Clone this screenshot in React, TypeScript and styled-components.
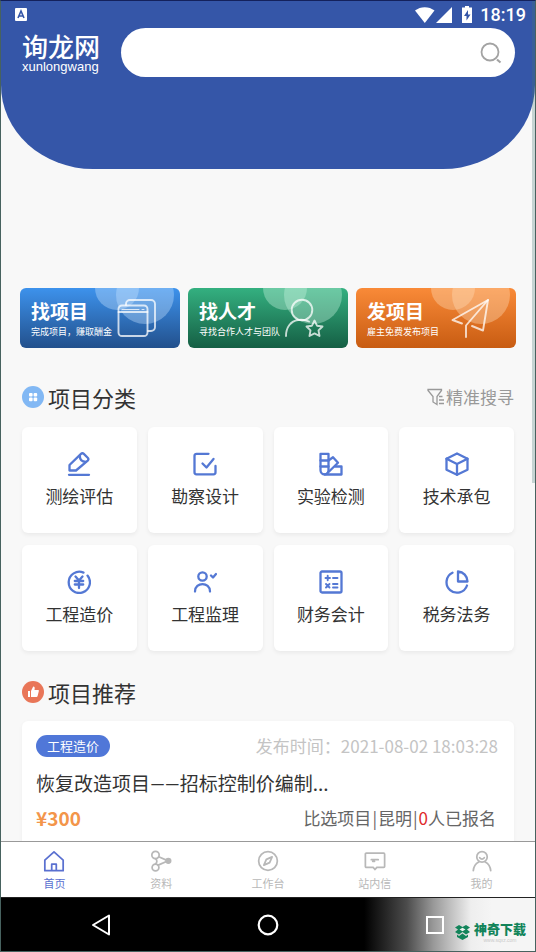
import React from "react";
import styled, { createGlobalStyle } from "styled-components";

const GlobalStyle = createGlobalStyle`
  *, *::before, *::after { box-sizing: border-box; }
  body {
    margin: 0;
    background: #f8f8f8;
    color: #333;
    font-family: "Noto Sans CJK SC", "Noto Sans", sans-serif;
  }
  button, input { font: inherit; color: inherit; }
  button { border: 0; padding: 0; background: none; cursor: pointer; }
  a { color: inherit; text-decoration: none; }
  h1, h2, h3, p { margin: 0; font-weight: 400; }
  svg { display: block; flex: none; }
`;

const Screen = styled.div`
  position: relative;
  display: flex;
  flex-direction: column;
  height: 100vh;
  overflow: hidden;
  border: 1px solid #47625f;
  border-top-color: #14215c;
`;

const ScrollThumb = styled.div`
  position: absolute;
  top: 0;
  right: 0;
  width: 3px;
  height: 482px;
  background: rgba(70, 120, 115, 0.28);
`;

const Content = styled.main`
  flex: 1;
  min-height: 0;
  overflow: hidden;
`;

const Header = styled.header`
  height: 168px;
  background: #3556a8;
  border-radius: 0 0 92px 92px / 0 0 84px 84px;
  color: #fff;
`;

const StatusBar = styled.div`
  display: flex;
  align-items: center;
  justify-content: space-between;
  height: 27px;
  padding: 0 9px 0 14px;
`;

const StatusGroup = styled.div`
  display: flex;
  align-items: center;
  gap: 7px;
`;

const Clock = styled.time`
  font: 500 18px/27px Roboto, sans-serif;
`;

const HeaderRow = styled.div`
  display: flex;
  align-items: center;
  gap: 19px;
  padding: 0 20px 0 21px;
`;

const Logo = styled.h1`
  display: flex;
  flex-direction: column;
  width: 80px;
`;

const LogoName = styled.span`
  font-size: 26px;
  font-weight: 500;
  line-height: 28px;
  white-space: nowrap;
`;

const LogoLatin = styled.span`
  font: 400 13px/14px "Liberation Sans", Arial, sans-serif;
`;

const SearchForm = styled.form`
  flex: 1;
  display: flex;
  align-items: center;
  height: 49px;
  padding: 0 13px 0 24px;
  border-radius: 25px;
  background: #fff;
`;

const SearchInput = styled.input`
  flex: 1;
  min-width: 0;
  border: 0;
  outline: 0;
  background: transparent;
  color: #333;
  font-size: 17px;
`;

const Carousel = styled.div`
  height: 119px;
`;

const Banners = styled.nav`
  display: grid;
  grid-template-columns: repeat(3, 1fr);
  gap: 8px;
  padding: 0 19px;
`;

const Banner = styled.a<{ $from: string; $to: string }>`
  position: relative;
  height: 60px;
  padding: 11px 0 0 11px;
  border-radius: 6px;
  overflow: hidden;
  background: linear-gradient(${(p) => p.$from}, ${(p) => p.$to});
  color: #fff;
`;

const BannerArt = styled.svg`
  position: absolute;
  top: 0;
  right: 0;
`;

const BannerTitle = styled.h2`
  position: relative;
  font-size: 19px;
  font-weight: 700;
  line-height: 24px;
`;

const BannerNote = styled.p`
  position: relative;
  font-size: 9px;
  line-height: 18px;
  white-space: nowrap;
`;

const Section = styled.section`
  padding: 0 21px;
`;

const SectionHead = styled.div<{ $top: number; $bottom: number }>`
  display: flex;
  align-items: center;
  justify-content: space-between;
  height: 32px;
  margin: ${(p) => p.$top}px 0 ${(p) => p.$bottom}px;
`;

const SectionTitle = styled.h2`
  display: flex;
  align-items: center;
  gap: 4px;
  font-size: 22px;
  line-height: 32px;
`;

const FilterButton = styled.button`
  display: flex;
  align-items: center;
  gap: 1px;
  color: #999;
  font-size: 17px;
  line-height: 24px;
`;

const CategoryGrid = styled.div`
  display: grid;
  grid-template-columns: repeat(4, 1fr);
  gap: 12px 11px;
`;

const Category = styled.button`
  display: flex;
  flex-direction: column;
  align-items: center;
  gap: 7px;
  height: 106px;
  padding-top: 25px;
  border-radius: 6px;
  background: #fff;
  box-shadow: 0 2px 4px rgba(0, 0, 0, 0.06);
  font-size: 17px;
  line-height: 26px;
`;

const Project = styled.article`
  display: flex;
  flex-direction: column;
  padding: 12px 16px 16px 14px;
  border-radius: 6px;
  background: #fff;
  box-shadow: 0 1px 4px rgba(0, 0, 0, 0.04);
`;

const ProjectRow = styled.div`
  display: flex;
  align-items: center;
  justify-content: space-between;
  font-size: 17px;
  line-height: 26px;
`;

const Tag = styled.span`
  padding: 0 11px;
  border-radius: 11px;
  background: #5077d8;
  color: #fff;
  font-size: 13px;
  line-height: 22px;
`;

const Published = styled.span`
  color: #c4c4c4;
`;

const ProjectTitle = styled.h3`
  margin: 10px 0 6px;
  font-size: 19px;
  line-height: 28px;
`;

const Dashes = styled.span`
  font-family: Roboto, sans-serif;
`;

const Price = styled.strong`
  color: #f3954a;
  font-size: 19px;
  font-weight: 700;
`;

const Meta = styled.span`
  padding-right: 2px;
  color: #666;
`;

const Bar = styled.span`
  margin: 0 1px;
`;

const Count = styled.span`
  color: #e02a2a;
`;

const TabBar = styled.nav`
  display: grid;
  grid-template-columns: repeat(5, 1fr);
  height: 56px;
  border-top: 1px solid #999;
  background: #fff;
`;

const Tab = styled.button<{ $active: boolean }>`
  display: flex;
  flex-direction: column;
  align-items: center;
  gap: 2px;
  padding-top: 8px;
  color: ${(p) => (p.$active ? "#5a70d0" : "#b8b8b8")};
  font-size: 11px;
  line-height: 18px;
`;

const SystemBar = styled.div`
  position: relative;
  height: 54px;
  border-top: 1px solid #222;
  background: linear-gradient(90deg, #000 68%, #4c4c4c 76%, #999 81%, #eee 88%, #f5f5f5 92%);
`;

const SystemKeys = styled.div`
  display: flex;
  align-items: center;
  justify-content: space-between;
  height: 100%;
  padding: 0 90px;
`;

const SystemKey = styled.button`
  display: flex;
`;

const Watermark = styled.div`
  position: absolute;
  right: 9px;
  bottom: 8px;
  display: flex;
  align-items: center;
  gap: 4px;
  color: #12845a;
`;

const WatermarkName = styled.div`
  font-size: 13px;
  font-weight: 900;
  line-height: 16px;
`;

const WatermarkSite = styled.div`
  color: #c9c9c9;
  font: 5px/6px "Liberation Sans", Arial, sans-serif;
  text-align: center;
`;

type IconProps = { children: React.ReactNode; size?: number; width?: number };

const LineIcon = ({ children, size = 24, width = 2.3 }: IconProps) => (
  <svg
    width={size}
    height={size}
    viewBox="0 0 24 24"
    fill="none"
    stroke="currentColor"
    strokeWidth={width}
    strokeLinecap="round"
    strokeLinejoin="round"
    aria-hidden="true"
  >
    {children}
  </svg>
);

const CategoryIcon = styled.span`
  color: #5478d4;
`;

const categories = [
  {
    label: "测绘评估",
    icon: (
      <>
        <path d="M2 22.800h20" />
        <path d="M2.500 18.500v-5.500L14 1.900a2 2 0 0 1 2.800 0l3.900 3.900a2 2 0 0 1 0 2.800L9 18.500z" />
        <path d="M12.800 3.800c0 4 2 6 6 6" />
      </>
    ),
  },
  {
    label: "勘察设计",
    icon: (
      <>
        <path d="M15.500 1.800H3.500A2 2 0 0 0 1.500 3.800v16.500a2 2 0 0 0 2 2h17a2 2 0 0 0 2-2V14" />
        <path d="M9.500 11.500l4 4 7-8.500" />
      </>
    ),
  },
  {
    label: "实验检测",
    icon: (
      <>
        <path d="M1.500 1.800h8v16.500a4 4 0 0 1-8 0z" />
        <path d="M1.500 8.500h8M1.500 14.500h8" />
        <path d="M9.500 8.500l4.500-3.200 5 5.500L8.500 21" />
        <path d="M16 14.500h6.500v8H5.500" />
      </>
    ),
  },
  {
    label: "技术承包",
    icon: (
      <>
        <path d="M12 1.500l10.500 5.300v10.900L12 22.800 1.500 17.700V6.800z" />
        <path d="M1.500 6.800L12 12l10.500-5.200M12 12v10.800" />
      </>
    ),
  },
  {
    label: "工程造价",
    icon: (
      <>
        <path d="M16.500 2.600A10.600 10.600 0 1 0 20.500 5.600" />
        <path d="M8.500 6.500L12 10.500l3.500-4M7.800 11h8.400M7.800 14.500h8.400M12 10.500V18" />
      </>
    ),
  },
  {
    label: "工程监理",
    icon: (
      <>
        <circle cx="9.500" cy="6.500" r="4.200" />
        <path d="M2 21.500c0-9.800 15-9.800 15 0" />
        <path d="M18 5.500l2 2 3-3.500" />
      </>
    ),
  },
  {
    label: "财务会计",
    icon: (
      <>
        <rect x="1.500" y="1.500" width="21" height="21" rx="1.500" />
        <path
          d="M6.500 8h4.500M8.700 5.800v4.500M14 8h4.500M7 14l3.500 3.500M10.500 14L7 17.500M14 14h4.500M14 17.500h4.500"
          strokeWidth="1.900"
        />
      </>
    ),
  },
  {
    label: "税务法务",
    icon: (
      <>
        <path d="M7.500 2.700A10.500 10.500 0 1 0 22 15.500" />
        <path d="M13 1.500v10h9.500A10 10 0 0 0 13 1.500z" />
      </>
    ),
  },
];

const tabs = [
  {
    label: "首页",
    icon: (
      <>
        <path d="M2 11L12 2l10 9v11.500H2z" />
        <path d="M9.500 22v-6.500h5V22" />
      </>
    ),
  },
  {
    label: "资料",
    icon: (
      <>
        <circle cx="6" cy="5.500" r="4" />
        <circle cx="6" cy="19" r="3.700" />
        <circle cx="20" cy="11.800" r="2.500" fill="currentColor" />
        <path d="M9.500 7.300l9 4M9 16.500l9.500-4.200M6 9.500c2 1.500 2 4 0 5.800" />
      </>
    ),
  },
  {
    label: "工作台",
    icon: (
      <>
        <circle cx="12" cy="12" r="10.200" />
        <path d="M16.500 7.500l-2.700 6.300-6.300 2.700 2.700-6.300z" />
      </>
    ),
  },
  {
    label: "站内信",
    icon: (
      <>
        <path d="M3 3.500h18.500a1 1 0 0 1 1 1V18a1 1 0 0 1-1 1H14l-2 2.300-2-2.300H2.500a1 1 0 0 1-1-1V4.500a1 1 0 0 1 1-1z" />
        <path d="M8 10.500h7.500M9.500 12.300h2" />
      </>
    ),
  },
  {
    label: "我的",
    icon: (
      <>
        <circle cx="12" cy="7.500" r="5.700" />
        <path d="M2.500 22.500c.5-5 3-8 6-9.500M21.500 22.500c-.5-5-3-8-6-9.500M9.500 8.500c1.500 2 3.500 2 5 0" />
      </>
    ),
  },
];

const banners = [
  {
    title: "找项目",
    note: "完成项目，赚取酬金",
    from: "#3d92ec",
    to: "#22508c",
    tint: "#c4e2ff",
    art: (
      <>
        <path d="M106 17v-1a4 4 0 0 1 4-4h21a4 4 0 0 1 4 4v23a4 4 0 0 1-4 4h-3" />
        <rect x="98.500" y="17.500" width="29" height="30.500" rx="3.500" />
        <path d="M98.500 24h29" />
        <path d="M102 21.500h17M122 21.500h2" strokeWidth="1" />
      </>
    ),
  },
  {
    title: "找人才",
    note: "寻找合作人才与团队",
    from: "#34b080",
    to: "#155f44",
    tint: "#c9f5e0",
    art: (
      <>
        <circle cx="114" cy="22" r="10.300" />
        <path d="M98 48c0-9 5-15 12-16 4-.5 8 0 11 1.500" />
        <path d="M126.500 32.500l2.500 5.200 5.500.8-4 3.900 1 5.600-5-2.600-5 2.600 1-5.600-4-3.900 5.500-.8z" />
      </>
    ),
  },
  {
    title: "发项目",
    note: "雇主免费发布项目",
    from: "#f98a38",
    to: "#c85c12",
    tint: "#ffdcb8",
    art: (
      <>
        <path d="M106 35.500L96.500 32 132 12l-5 30.500-11-4.500" />
        <path d="M132 12l-22 25.500V49" />
      </>
    ),
  },
];

export default function App() {
  return (
    <>
      <GlobalStyle />
      <Screen>
        <Content>
          <Header>
            <StatusBar>
              <svg width="12" height="13" viewBox="0 0 12 13" aria-hidden="true">
                <rect width="12" height="13" rx="1" fill="#fff" />
                <path d="M3 10l3-7 3 7M4 8h4" fill="none" stroke="#3556a8" strokeWidth="1.600" />
              </svg>
              <StatusGroup>
                <svg width="58" height="18" viewBox="0 0 58 18" fill="#fff" aria-hidden="true">
                  <path d="M0 4.500C5.500 0 14 0 19.500 4.500L9.800 17z" />
                  <path d="M37 1v16H21z" />
                  <path d="M50 0h4v1.500h3V17H47V1.500h3z" />
                  <path d="M53 4l-4 6h2.500v4.500l4-6H53z" fill="#3556a8" />
                </svg>
                <Clock>18:19</Clock>
              </StatusGroup>
            </StatusBar>
            <HeaderRow>
              <Logo>
                <LogoName>询龙网</LogoName>
                <LogoLatin>xunlongwang</LogoLatin>
              </Logo>
              <SearchForm role="search" onSubmit={(e) => e.preventDefault()}>
                <SearchInput type="search" aria-label="搜索" />
                <button type="submit" aria-label="搜索">
                  <svg
                    width="22"
                    height="22"
                    viewBox="0 0 22 22"
                    fill="none"
                    stroke="#a3a3a3"
                    strokeWidth="1.800"
                  >
                    <circle cx="10" cy="10" r="8.500" />
                    <path d="M17 17.500l3.500 3" strokeWidth="2.200" />
                  </svg>
                </button>
              </SearchForm>
            </HeaderRow>
          </Header>
          <Carousel />
          <Banners>
            {banners.map((b) => (
              <Banner key={b.title} href="#" $from={b.from} $to={b.to}>
                <BannerArt width="90" height="60" viewBox="70 0 90 60" aria-hidden="true">
                  <g fill={b.tint} fillOpacity="0.38">
                    <circle cx="97" cy="0" r="22" />
                    <circle cx="125" cy="7" r="29" />
                  </g>
                  <g
                    fill="none"
                    stroke="#fff"
                    strokeOpacity="0.75"
                    strokeWidth="1.900"
                    strokeLinejoin="round"
                    strokeLinecap="round"
                  >
                    {b.art}
                  </g>
                </BannerArt>
                <BannerTitle>{b.title}</BannerTitle>
                <BannerNote>{b.note}</BannerNote>
              </Banner>
            ))}
          </Banners>

          <Section>
            <SectionHead $top={33} $bottom={14}>
              <SectionTitle>
                <svg width="22" height="22" viewBox="0 0 22 22" aria-hidden="true">
                  <circle cx="11" cy="11" r="11" fill="#82b8f4" />
                  <g fill="#fff">
                    <rect x="7" y="7" width="3.600" height="3.600" rx="1" />
                    <rect x="11.600" y="7" width="3.600" height="3.600" rx="1" />
                    <rect x="7" y="11.600" width="3.600" height="3.600" rx="1" />
                    <rect x="11.600" y="11.600" width="3.600" height="3.600" rx="1" />
                  </g>
                </svg>
                项目分类
              </SectionTitle>
              <FilterButton>
                <svg
                  width="18"
                  height="18"
                  viewBox="0 0 18 18"
                  fill="none"
                  stroke="currentColor"
                  strokeWidth="1.300"
                  aria-hidden="true"
                >
                  <path d="M10 16.500L6 14V8.500L1 2.500V1.500h13.500v1L10 8.500z" />
                  <path d="M12 8.500h3.500M12 12h5M12 15.500h5" />
                </svg>
                精准搜寻
              </FilterButton>
            </SectionHead>
            <CategoryGrid>
              {categories.map((c) => (
                <Category key={c.label}>
                  <CategoryIcon>
                    <LineIcon>{c.icon}</LineIcon>
                  </CategoryIcon>
                  {c.label}
                </Category>
              ))}
            </CategoryGrid>
          </Section>

          <Section>
            <SectionHead $top={25} $bottom={13}>
              <SectionTitle>
                <svg width="22" height="22" viewBox="0 0 22 22" aria-hidden="true">
                  <circle cx="11" cy="11" r="11" fill="#e97658" />
                  <path
                    d="M6 10h2v6H6zM9 10l2.200-4.500c1.500 0 1.800 1 1.300 3.500H16c.8 0 1 .6.800 1.300l-1.200 4.700c-.2.700-.5 1-1.100 1H9z"
                    fill="#fff"
                  />
                </svg>
                项目推荐
              </SectionTitle>
            </SectionHead>
            <Project>
              <ProjectRow>
                <Tag>工程造价</Tag>
                <Published>发布时间：2021-08-02 18:03:28</Published>
              </ProjectRow>
              <ProjectTitle>
                恢复改造项目<Dashes>——</Dashes>招标控制价编制...
              </ProjectTitle>
              <ProjectRow>
                <Price>¥300</Price>
                <Meta>
                  比选项目<Bar>|</Bar>昆明<Bar>|</Bar>
                  <Count>0</Count>人已报名
                </Meta>
              </ProjectRow>
            </Project>
          </Section>
        </Content>

        <TabBar>
          {tabs.map((t, i) => (
            <Tab key={t.label} $active={i === 0} aria-current={i === 0 ? "page" : undefined}>
              <LineIcon size={22} width={1.9}>
                {t.icon}
              </LineIcon>
              {t.label}
            </Tab>
          ))}
        </TabBar>

        <SystemBar>
          <SystemKeys>
            <SystemKey aria-label="返回">
              <svg
                width="20"
                height="22"
                viewBox="0 0 20 22"
                fill="none"
                stroke="#fff"
                strokeWidth="2"
                strokeLinejoin="round"
              >
                <path d="M18 1.500v19L2 11z" />
              </svg>
            </SystemKey>
            <SystemKey aria-label="主页">
              <svg width="22" height="22" viewBox="0 0 22 22" fill="none" stroke="#fff" strokeWidth="2.200">
                <circle cx="11" cy="11" r="9.300" />
              </svg>
            </SystemKey>
            <SystemKey aria-label="最近任务">
              <svg width="20" height="20" viewBox="0 0 20 20" fill="none" stroke="#fff" strokeWidth="2">
                <rect x="2" y="2" width="16" height="16" />
              </svg>
            </SystemKey>
          </SystemKeys>
          <Watermark>
            <svg width="15" height="15" viewBox="0 0 15 15" fill="#12845a" aria-hidden="true">
              <path d="M4 0l3.500 2L11 0l4 2.500-3 2L15 7l-4 2.500L7.500 7 4 9.500 0 7l3-2.500-3-2z" />
              <path d="M2 9.500l2 1.500 3.500-2.500L11 11l2-1.500V12l-5.500 3L2 12z" />
              <path d="M7.500 2.800L4.500 4.500l3 1.800 3-1.800z" fill="#e8f3ee" />
            </svg>
            <div>
              <WatermarkName>神奇下载</WatermarkName>
              <WatermarkSite>www.sqxz.com</WatermarkSite>
            </div>
          </Watermark>
        </SystemBar>
        <ScrollThumb />
      </Screen>
    </>
  );
}
